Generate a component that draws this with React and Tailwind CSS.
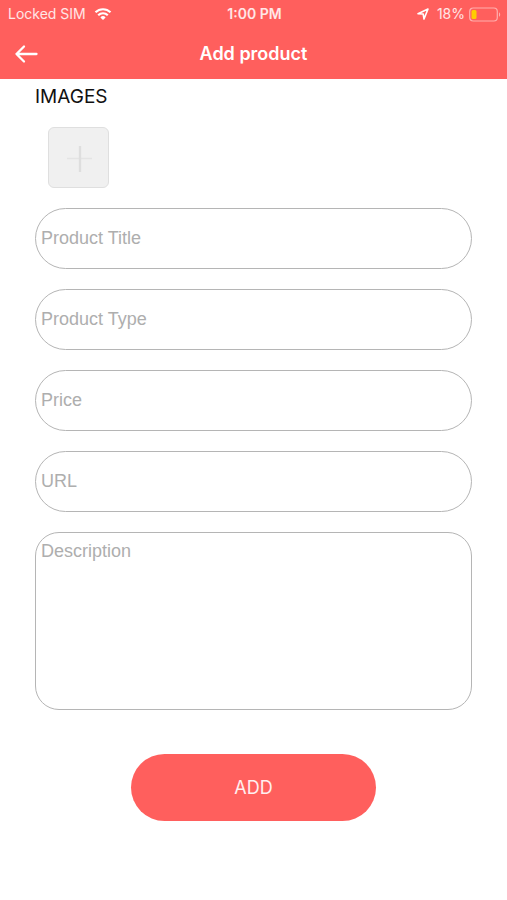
import { useState } from 'react';

const fields = [
  { name: 'title', label: 'Product Title' },
  { name: 'type', label: 'Product Type' },
  { name: 'price', label: 'Price' },
  { name: 'url', label: 'URL' },
];

function StatusBar() {
  return (
    <div className="grid grid-cols-[1fr_auto_1fr] items-center h-7 pl-2 pr-1.5 text-sm text-white/85">
      <div className="flex items-center gap-2">
        <span>Locked SIM</span>
        <svg className="w-[18px] h-3" viewBox="0 0 17 12" fill="none" stroke="white" strokeWidth="2.2">
          <path d="M1 4.3a10.8 10.8 0 0 1 15 0" />
          <path d="M3.7 7.2a6.9 6.9 0 0 1 9.6 0" />
          <path d="M8.5 12 5.9 9.4a3.7 3.7 0 0 1 5.2 0z" fill="white" stroke="none" />
        </svg>
      </div>
      <span className="text-center font-semibold">1:00 PM</span>
      <div className="flex items-center justify-end">
        <svg className="w-3 h-3 mr-2" viewBox="0 0 12 12" fill="none" stroke="white" strokeWidth="1.6" strokeLinejoin="round">
          <path d="M1 5.8 11 1 7 11 6.2 6z" />
        </svg>
        <span>18%</span>
        <svg className="w-8 h-[15px] ml-1" viewBox="0 0 32 15" fill="none">
          <rect x="0.7" y="1" width="27.6" height="13" rx="3.5" stroke="white" strokeOpacity="0.5" strokeWidth="1.2" />
          <rect x="2.5" y="3" width="5" height="9" rx="1.5" fill="#ffcc00" />
          <path d="M30 5.2v4.6c1.6-.8 1.6-3.8 0-4.6z" fill="white" fillOpacity="0.5" />
        </svg>
      </div>
    </div>
  );
}

function AddProduct() {
  const [product, setProduct] = useState({ title: '', type: '', price: '', url: '', description: '' });

  const handleChange = (e) => {
    setProduct({ ...product, [e.target.name]: e.target.value });
  };

  return (
    <div className="min-h-screen bg-white font-['Inter',sans-serif]">
      <header className="bg-[#ff5f5d]">
        <StatusBar />
        <div className="grid grid-cols-[40px_1fr_40px] items-center h-[51px] px-[14px]">
          <button type="button" aria-label="Back" className="w-6 h-6">
            <svg className="w-6 h-6" viewBox="0 0 24 24" fill="none" stroke="white" strokeWidth="2.3" strokeLinecap="round" strokeLinejoin="round">
              <path d="M22.5 12H2.5M10 4.5 2.5 12l7.5 7.5" />
            </svg>
          </button>
          <h1 className="text-center text-lg font-semibold text-white">Add product</h1>
        </div>
      </header>

      <form className="px-[35px] pb-10" onSubmit={(e) => e.preventDefault()}>
        <h2 className="pt-1 text-[19px] leading-7 text-[#111111]">IMAGES</h2>
        <button
          type="button"
          aria-label="Add image"
          className="flex items-center justify-center w-[61px] h-[61px] mt-4 ml-[13px] rounded-md border border-[#dfdfdf] bg-[#f0f0f0]"
        >
          <svg className="w-7 h-7" viewBox="0 0 28 28" fill="none">
            <path d="M2 14.5h25" stroke="#e4e4e4" strokeWidth="1.5" />
            <path d="M15 2v26" stroke="#dedede" strokeWidth="2.4" />
          </svg>
        </button>

        <div className="flex flex-col gap-5 mt-5 font-['Liberation_Sans',sans-serif]">
          {fields.map((field) => (
            <input
              key={field.name}
              name={field.name}
              aria-label={field.label}
              placeholder={field.label}
              value={product[field.name]}
              onChange={handleChange}
              className="w-full h-[61px] px-[5px] rounded-full border border-[#b5b5b5] text-lg placeholder:text-[#aeaeae] outline-none"
            />
          ))}
          <textarea
            name="description"
            aria-label="Description"
            placeholder="Description"
            value={product.description}
            onChange={handleChange}
            className="block w-full h-[178px] px-[5px] py-1 rounded-3xl border border-[#b5b5b5] text-lg placeholder:text-[#aeaeae] outline-none resize-none"
          />
        </div>

        <button
          type="submit"
          className="block w-[245px] h-[67px] mx-auto mt-11 rounded-full bg-[#ff5f5d] text-lg text-white/90"
        >
          ADD
        </button>
      </form>
    </div>
  );
}

export default AddProduct;
